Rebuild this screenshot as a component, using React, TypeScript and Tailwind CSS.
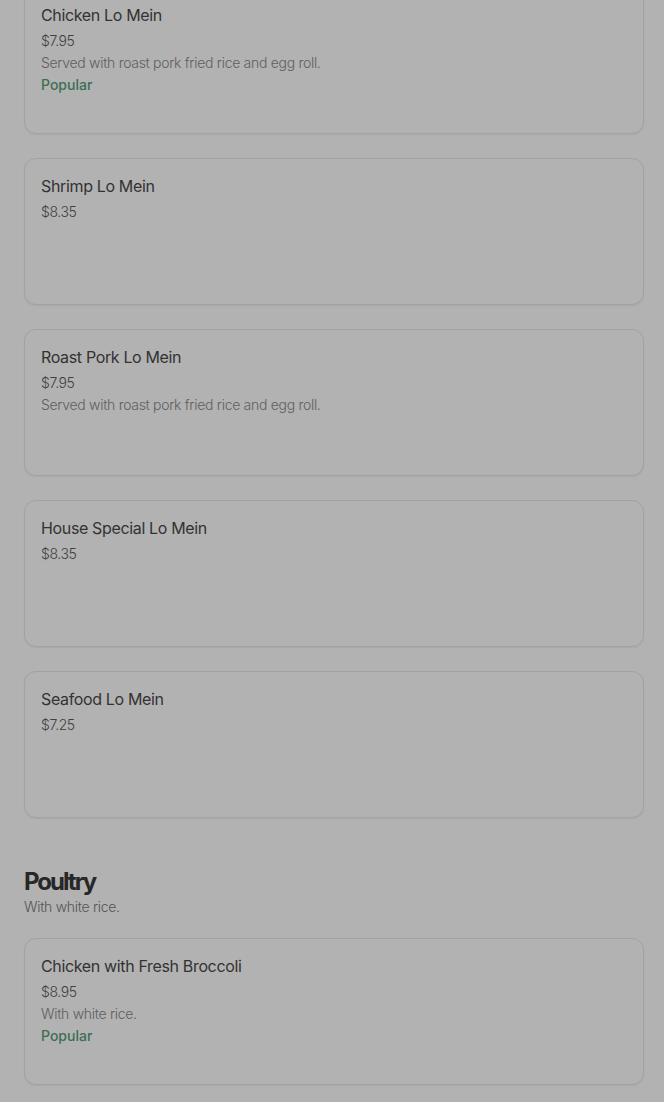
import React from 'react';

type Item = {
  name: string;
  price: string;
  description?: string;
  popular?: boolean;
};

const LO_MEIN: Item[] = [
  {
    name: 'Chicken Lo Mein',
    price: '$7.95',
    description: 'Served with roast pork fried rice and egg roll.',
    popular: true,
  },
  { name: 'Shrimp Lo Mein', price: '$8.35' },
  {
    name: 'Roast Pork Lo Mein',
    price: '$7.95',
    description: 'Served with roast pork fried rice and egg roll.',
  },
  { name: 'House Special Lo Mein', price: '$8.35' },
  { name: 'Seafood Lo Mein', price: '$7.25' },
];

const POULTRY: Item[] = [
  {
    name: 'Chicken with Fresh Broccoli',
    price: '$8.95',
    description: 'With white rice.',
    popular: true,
  },
];

function MenuCard({ item }: { item: Item }) {
  return (
    <div className="h-[147px] rounded-xl border border-[#e8e8e8] bg-white px-4 pt-[15px] shadow-[0_1px_2px_rgba(0,0,0,0.06)]">
      <p className="text-[16px] leading-6 font-normal tracking-[-0.35px] text-[#4a4a4a]">
        {item.name}
      </p>
      <p className="mt-[3px] text-[14px] leading-[22px] font-light tracking-[-0.4px] text-[#5c5c5c]">
        {item.price}
      </p>
      {item.description && (
        <p className="text-[14px] leading-[22px] font-light tracking-[-0.3px] text-[#8a8a8a]">
          {item.description}
        </p>
      )}
      {item.popular && (
        <p className="text-[14px] leading-[22px] font-medium text-[#579e7b]">Popular</p>
      )}
    </div>
  );
}

export default function App() {
  return (
    <div
      className="relative min-h-screen overflow-hidden bg-white"
      style={{ fontFamily: 'Inter, Roboto, "Noto Sans", sans-serif' }}
    >
      <div className="pb-10 pl-6 pr-5">
        <div className="-mt-[13px] flex flex-col gap-6">
          {LO_MEIN.map((item) => (
            <MenuCard key={item.name} item={item} />
          ))}
        </div>

        <section className="mt-12">
          <h2 className="text-[24px] leading-8 font-bold tracking-[-2px] text-[#383838]">
            Poultry
          </h2>
          <p className="-mt-px text-[14px] leading-5 font-light tracking-[-0.3px] text-[#7a7a7a]">
            With white rice.
          </p>
          <div className="mt-[21px] flex flex-col gap-6">
            {POULTRY.map((item) => (
              <MenuCard key={item.name} item={item} />
            ))}
          </div>
        </section>
      </div>

      {/* modal backdrop */}
      <div className="fixed inset-0 bg-black/30" />
    </div>
  );
}
